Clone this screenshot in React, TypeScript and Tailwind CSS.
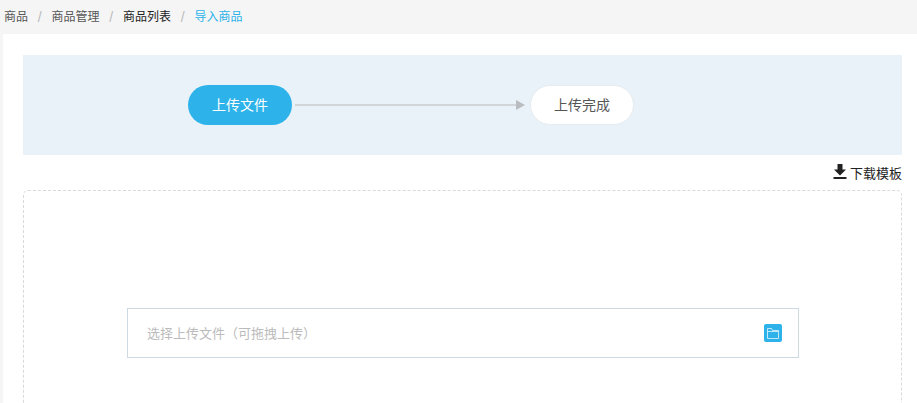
import React from 'react';

const cjk = 'font-["Liberation_Sans","Noto_Sans_CJK_SC",sans-serif]';

const crumbs = [
  { label: '商品', className: 'text-[#555]' },
  { label: '商品管理', className: 'text-[#555]' },
  { label: '商品列表', className: 'text-[#222]' },
];

export default function App() {
  return (
    <div className={`h-[403px] w-[917px] overflow-hidden bg-[#f5f5f5] ${cjk}`}>
      {/* Breadcrumb */}
      <div className="flex h-[34px] items-center pl-1 text-xs">
        {crumbs.map((c) => (
          <React.Fragment key={c.label}>
            <span className={c.className}>{c.label}</span>
            <span className="mx-[9px] w-[5.5px] text-center text-sm leading-none text-[#bbb]">/</span>
          </React.Fragment>
        ))}
        <span className="text-[#2db3ea]">导入商品</span>
      </div>

      {/* Content */}
      <div className="ml-[3px] h-[369px] bg-white pt-[21px] pr-[15px] pl-5">
        {/* Steps */}
        <div className="flex h-[100px] items-center bg-[#e9f2f8] pl-[165px]">
          <div className="flex h-10 w-[104px] items-center justify-center rounded-[20px] bg-[#2db3ea] text-sm text-white">
            上传文件
          </div>
          <div className="ml-[3px] flex w-[230px] items-center">
            <div className="h-[2px] flex-1 bg-[#d0d5d9]" />
            <svg width="9" height="10" viewBox="0 0 9 10" className="block">
              <path d="M0 0L9 5L0 10Z" fill="#b9bdc2" />
            </svg>
          </div>
          <div className="ml-[5px] flex h-10 w-[104px] items-center justify-center rounded-[20px] border border-[#e6ecf0] bg-white text-sm text-[#555]">
            上传完成
          </div>
        </div>

        {/* Download */}
        <div className="flex h-[35px] items-center justify-end gap-[3px] pt-[2px] text-[13px] text-[#222]">
          <svg width="14" height="15" viewBox="0 0 14 15" className="mb-[5px] block">
            <path d="M4.5 0H9.5V5.5H13L7 11.5L1 5.5H4.5Z M0.5 13H13.5V15H0.5Z" fill="#222" />
          </svg>
          <span>下载模板</span>
        </div>

        {/* Upload area */}
        <div className="h-[260px] rounded-[5px] border border-dashed border-[#d9d9d9] pt-[117px] pr-[102px] pl-[103px]">
          <div className="flex h-[50px] items-center justify-between border border-[#cddae2] pr-4 pl-[19px] text-[13px] text-[#bbb]">
            <span className="pt-[2px]">选择上传文件（可拖拽上传）</span>
            <div className="flex h-[18px] w-[18px] items-center justify-center rounded-[2px] bg-[#2db3ea]">
              <svg width="12" height="11" viewBox="0 0 12 11" fill="none" stroke="#d8f1fb" strokeOpacity="0.85" strokeWidth="1">
                <path d="M0.5 10.5V0.5H4.5L5.5 2.5H11.5V10.5Z M0.5 3.5H11.5" />
              </svg>
            </div>
          </div>
        </div>
      </div>
    </div>
  );
}
